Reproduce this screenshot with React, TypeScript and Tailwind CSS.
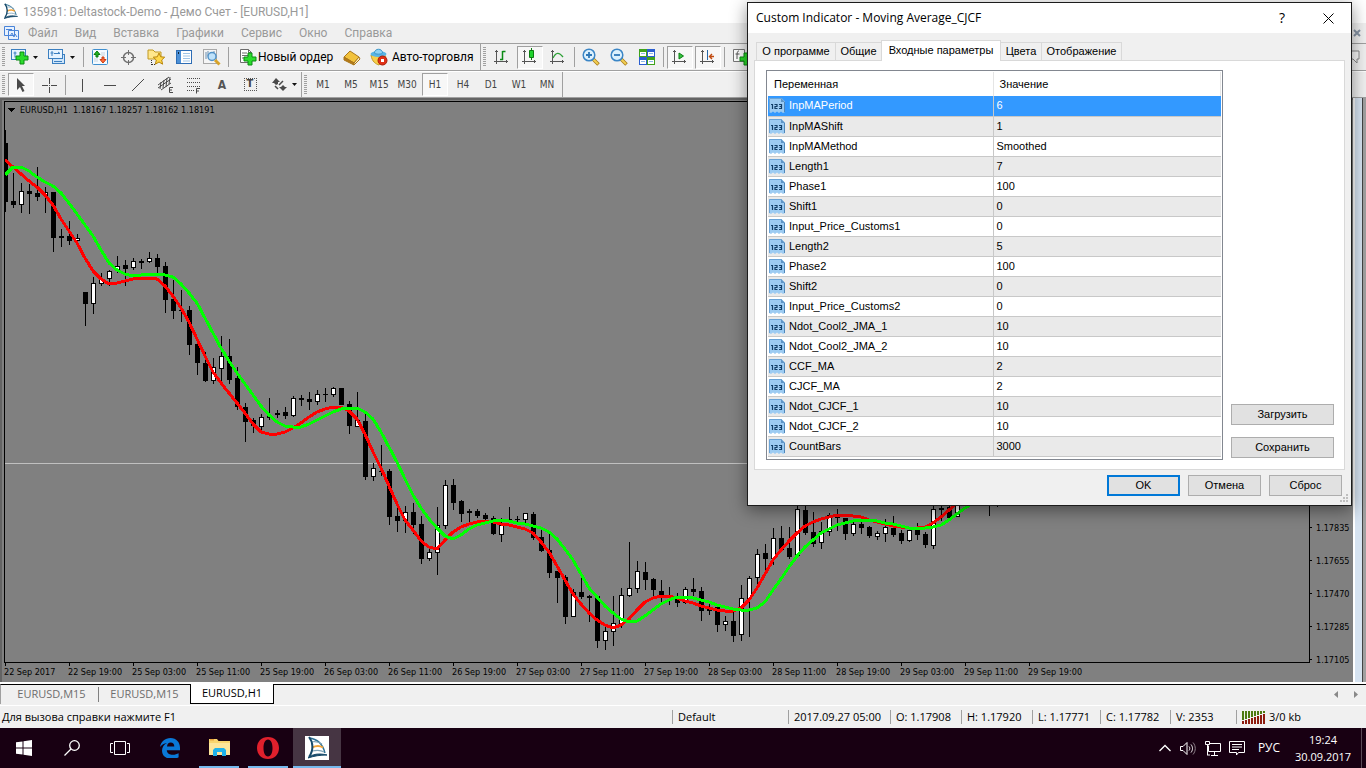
import type { ReactNode } from "react";
import { clsx } from "clsx";

// [high, body top, body bottom, low, rising]
type Candle = [number, number, number, number, 0 | 1];

const CANDLES: Candle[] = [
  [130, 143, 202, 212, 0], [173, 201, 205, 208, 0], [183, 191, 205, 213, 1], [184, 191, 194, 214, 0],
  [167, 193, 197, 201, 0], [187, 192, 196, 213, 1], [192, 192, 238, 252, 0], [229, 236, 238, 247, 0],
  [221, 236, 241, 245, 0], [234, 238, 241, 247, 1], [292, 292, 304, 326, 0], [277, 283, 304, 314, 1],
  [273, 279, 284, 286, 1], [270, 271, 279, 286, 1], [256, 266, 271, 273, 1], [260, 265, 269, 286, 0],
  [258, 261, 268, 270, 1], [259, 261, 263, 269, 0], [252, 258, 262, 263, 1], [254, 258, 267, 273, 0],
  [262, 266, 300, 313, 0], [280, 299, 311, 319, 0], [290, 310, 311, 322, 0], [306, 310, 345, 355, 0],
  [344, 344, 363, 375, 0], [352, 363, 381, 382, 0], [358, 367, 381, 384, 1], [336, 356, 369, 382, 1],
  [339, 356, 380, 384, 0], [367, 378, 407, 410, 0], [403, 407, 422, 442, 0], [418, 420, 426, 433, 0],
  [414, 417, 427, 430, 1], [398, 415, 418, 420, 1], [410, 413, 415, 418, 0], [407, 412, 416, 419, 0],
  [396, 398, 416, 417, 1], [395, 398, 400, 406, 0], [392, 399, 402, 410, 0], [390, 394, 402, 405, 1],
  [388, 394, 395, 402, 0], [387, 388, 395, 397, 1], [388, 388, 405, 405, 0], [401, 404, 426, 434, 0],
  [392, 420, 427, 427, 1], [414, 421, 477, 480, 0], [463, 468, 477, 481, 1], [445, 471, 472, 476, 0],
  [469, 471, 517, 525, 0], [502, 516, 521, 532, 0], [506, 512, 521, 533, 1], [503, 512, 525, 534, 0],
  [516, 524, 559, 564, 0], [548, 552, 559, 561, 1], [507, 525, 553, 575, 1], [480, 485, 526, 529, 1],
  [479, 485, 503, 510, 0], [500, 501, 514, 522, 0], [509, 511, 513, 523, 0], [509, 511, 516, 518, 0],
  [513, 515, 519, 521, 0], [516, 518, 534, 535, 0], [518, 525, 535, 542, 1], [507, 519, 520, 522, 0],
  [516, 519, 520, 522, 0], [513, 513, 520, 523, 1], [512, 514, 538, 540, 0], [530, 537, 551, 552, 0],
  [534, 550, 573, 578, 0], [571, 571, 578, 603, 0], [575, 577, 617, 624, 0], [589, 592, 617, 617, 1],
  [575, 592, 597, 599, 0], [595, 596, 598, 622, 0], [596, 596, 641, 648, 0], [626, 631, 641, 650, 1],
  [596, 623, 632, 646, 1], [588, 595, 624, 628, 1], [542, 588, 596, 597, 1], [561, 571, 589, 593, 1],
  [562, 572, 580, 590, 0], [578, 579, 590, 596, 0], [580, 591, 597, 602, 0], [587, 596, 597, 605, 0],
  [593, 599, 603, 607, 0], [587, 589, 603, 604, 1], [578, 589, 592, 596, 0], [587, 591, 611, 621, 0],
  [604, 608, 611, 615, 0], [605, 607, 625, 632, 0], [616, 621, 625, 631, 1], [612, 621, 636, 642, 0],
  [585, 598, 635, 641, 1], [576, 578, 599, 637, 1], [549, 554, 578, 586, 1], [544, 553, 559, 572, 0],
  [528, 538, 559, 565, 1], [526, 538, 550, 550, 0], [527, 548, 557, 559, 0], [500, 509, 556, 558, 1],
  [500, 510, 533, 535, 0], [512, 532, 544, 547, 0], [522, 531, 543, 549, 1], [513, 515, 532, 536, 1],
  [509, 516, 518, 531, 0], [518, 518, 534, 540, 0], [522, 524, 534, 536, 1], [520, 524, 528, 534, 0],
  [526, 527, 536, 538, 0], [531, 533, 537, 540, 1], [519, 527, 534, 542, 1], [516, 528, 535, 537, 0],
  [530, 533, 541, 544, 0], [528, 530, 541, 542, 1], [523, 530, 535, 540, 0], [532, 534, 545, 548, 0],
  [490, 509, 546, 549, 1], [490, 508, 510, 521, 0], [490, 507, 518, 518, 0], [480, 490, 517, 517, 1],
  [480, 485, 492, 500, 0], [480, 485, 492, 500, 0], [480, 485, 492, 500, 0], [480, 485, 492, 516, 0],
  [480, 485, 492, 507, 0],
];

const FAST = [
  160, 167, 174, 181, 187, 195, 205, 219, 231, 243, 258, 271, 279, 284, 283, 281, 279, 278, 278, 279, 286, 296,
  308, 322, 339, 356, 372, 383, 393, 403, 413, 424, 432, 434, 434, 432, 428, 423, 417, 412, 409, 407, 407, 411,
  419, 434, 452, 468, 486, 504, 520, 530, 541, 547, 549, 540, 532, 527, 524, 522, 521, 522, 524, 525, 527, 529,
  533, 542, 552, 566, 580, 594, 604, 613, 620, 625, 628, 625, 619, 610, 602, 598, 596, 596, 598, 601, 603, 606,
  608, 610, 611, 611, 608, 600, 588, 574, 560, 550, 541, 533, 526, 522, 519, 517, 515, 515, 516, 517, 520, 522,
  524, 526, 527, 528, 528, 527, 523, 517, 510, 503, 496,
];

const SLOW = [
  175, 167, 167, 171, 177, 182, 186, 193, 203, 214, 225, 236, 250, 263, 270, 274, 276, 275, 274, 274, 275, 277,
  284, 293, 303, 318, 333, 348, 361, 373, 384, 395, 406, 415, 422, 426, 427, 427, 424, 420, 416, 412, 409, 408,
  408, 412, 419, 432, 447, 462, 479, 495, 508, 519, 528, 536, 539, 535, 529, 525, 523, 521, 520, 521, 523, 524,
  526, 528, 532, 539, 549, 560, 574, 588, 597, 606, 613, 619, 622, 621, 616, 610, 604, 600, 597, 597, 598, 600,
  602, 605, 607, 609, 610, 610, 608, 602, 590, 579, 567, 556, 547, 540, 533, 529, 525, 523, 521, 520, 520, 521,
  523, 524, 526, 528, 528, 528, 527, 525, 520, 514, 508, 503, 497,
];

const TIMES = [
  "22 Sep 2017", "22 Sep 19:00", "25 Sep 03:00", "25 Sep 11:00", "25 Sep 19:00", "26 Sep 03:00",
  "26 Sep 11:00", "26 Sep 19:00", "27 Sep 03:00", "27 Sep 11:00", "27 Sep 19:00", "28 Sep 03:00",
  "28 Sep 11:00", "28 Sep 19:00", "29 Sep 03:00", "29 Sep 11:00", "29 Sep 19:00",
];

const PRICES = ["1.17835", "1.17655", "1.17470", "1.17285", "1.17105"];

const PARAMS: [string, string][] = [
  ["InpMAPeriod", "6"],
  ["InpMAShift", "1"],
  ["InpMAMethod", "Smoothed"],
  ["Length1", "7"],
  ["Phase1", "100"],
  ["Shift1", "0"],
  ["Input_Price_Customs1", "0"],
  ["Length2", "5"],
  ["Phase2", "100"],
  ["Shift2", "0"],
  ["Input_Price_Customs2", "0"],
  ["Ndot_Cool2_JMA_1", "10"],
  ["Ndot_Cool2_JMA_2", "10"],
  ["CCF_MA", "2"],
  ["CJCF_MA", "2"],
  ["Ndot_CJCF_1", "10"],
  ["Ndot_CJCF_2", "10"],
  ["CountBars", "3000"],
];

const MENU = ["Файл", "Вид", "Вставка", "Графики", "Сервис", "Окно", "Справка"];
const TIMEFRAMES = ["M1", "M5", "M15", "M30", "H1", "H4", "D1", "W1", "MN"];

const toPoints = (values: number[]) => values.map((y, i) => `${5 + i * 8},${y}`).join(" ");

/* ---------- icons ---------- */

const Icon = ({ size = 18, children }: { size?: number; children: ReactNode }) => (
  <svg width={size} height={size} viewBox={`0 0 ${size} ${size}`} fill="none" className="shrink-0" aria-hidden="true">
    {children}
  </svg>
);

const SailIcon = ({ size }: { size: number }) => (
  <svg width={size} height={size} viewBox="0 0 24 24" fill="none" className="shrink-0 bg-white" aria-hidden="true">
    <path d="M4 2c9 1 14 7 16 15" stroke="#2d6f92" strokeWidth="1.4" />
    <path d="M6 6c4-1 8 0 11 2M7 15c5-1 9-1 12 1" stroke="#7fa3b7" strokeWidth="1.2" />
    <path d="M7 11.500c4-2 8-2 11 0" stroke="#f2a33a" strokeWidth="2" />
    <path d="M4 1c4 5 5 13 0 20" stroke="#174a6a" strokeWidth="2" />
    <path d="M3 22c4-4 11-5 19-3-7 0-13 1-19 3z" fill="#174a6a" stroke="#174a6a" />
  </svg>
);

const Plus = ({ x, y }: { x: number; y: number }) => (
  <path d={`M${x + 4} ${y}h4v4h4v4h-4v4h-4v-4h-4v-4h4z`} fill="#2bdc2b" stroke="#0a8a12" />
);

const NewChartIcon = () => (
  <Icon>
    <rect x="0.5" y="1.5" width="14" height="10" fill="#e6f3ff" stroke="#3b7fc0" />
    <path d="M4 3.500v6M2.500 5h3M6 8.500h6" stroke="#3b7fc0" />
    <Plus x={5} y={4} />
  </Icon>
);

const ProfilesIcon = () => (
  <Icon>
    <rect x="4.500" y="6.500" width="12" height="9" fill="#cfe6fb" stroke="#3b7fc0" />
    <rect x="0.500" y="1.500" width="14" height="9" fill="#e6f3ff" stroke="#3b7fc0" />
    <path d="M4 3v5M2.500 5h3M6 5.500h6M10 4l2 1.500" stroke="#3b7fc0" />
    <path d="M6 13.500h8" stroke="#3b7fc0" />
  </Icon>
);

const MarketWatchIcon = () => (
  <Icon size={16}>
    <rect x="0.500" y="0.500" width="15" height="15" rx="1" fill="#f4faff" stroke="#3f8fcf" />
    <path d="M9 4h4M9 6h4M2 10h4M2 12h4" stroke="#c8d4de" />
    <path d="M5 2l3 3.500H6v2.500H4V5.500H2z" fill="#20b020" stroke="#0b7d10" />
    <path d="M11 14l-3-3.500h2V8h2v2.500h2z" fill="#ff6a3a" stroke="#c83c10" />
  </Icon>
);

const NavigatorIcon = () => (
  <Icon size={16}>
    <circle cx="8.500" cy="8.500" r="5" stroke="#6f6f6f" strokeWidth="1.500" />
    <path d="M8.500 1v5M8.500 11v5M1 8.500h5M11 8.500h5" stroke="#6f6f6f" />
  </Icon>
);

const FavoritesIcon = () => (
  <Icon>
    <path d="M1 2h5l2 2h6v7H1z" fill="#ffe78c" stroke="#c09820" />
    <path d="M4.500 12v5M5 16.500h4" stroke="#333" strokeDasharray="1 1" />
    <path d="M12 5l1.700 3.800 4 .4-3 2.800.9 4.200-3.600-2.200L8.400 16.200l.9-4.200-3-2.800 4-.4z" fill="#ffd84a" stroke="#b8860b" />
  </Icon>
);

const TerminalIcon = () => (
  <Icon size={16}>
    <rect x="0.500" y="1.500" width="15" height="13" fill="#fff" stroke="#2d6db5" />
    <path d="M3 2v12" stroke="#4b8fd6" strokeWidth="4" />
    <path d="M7 4.500h7M7 7h7M7 9.500h7M7 12h7" stroke="#9fc4e6" />
    <path d="M2 3h1v2H2z" fill="#123" />
  </Icon>
);

const TesterIcon = () => (
  <Icon>
    <rect x="0.500" y="1.500" width="13" height="14" fill="#f5f5f5" stroke="#a8a8a8" />
    <path d="M3 4v7M5 3v5M11 3v5" stroke="#6a8fb0" />
    <circle cx="9" cy="8.500" r="4" fill="#bfe2fa" stroke="#5293c8" strokeWidth="1.500" />
    <path d="M12 12l4.500 4.500" stroke="#d7a32a" strokeWidth="3" />
  </Icon>
);

const NewOrderIcon = () => (
  <Icon>
    <path d="M1.500 1.500h8l3 3v10h-11z" fill="#fff" stroke="#6c6c6c" />
    <path d="M3 5h5M3 7.500h7M3 10h4" stroke="#6c6c6c" />
    <path d="M9.500 1.500v3h3" stroke="#6c6c6c" />
    <Plus x={5} y={5} />
  </Icon>
);

const BookIcon = () => (
  <Icon>
    <path d="M1 9l6-6 9 6-5 6z" fill="#f2c23c" stroke="#a9761a" />
    <path d="M1 9v3l10 5v-2z" fill="#b57a18" stroke="#a9761a" />
    <path d="M11 15v2l6-6-1-2z" fill="#fff4c8" stroke="#a9761a" />
  </Icon>
);

const RobotIcon = () => (
  <Icon>
    <path d="M1 7c1 7 5 9 8 10l7-9z" fill="#f6cf4a" stroke="#c39a26" />
    <ellipse cx="8.500" cy="6" rx="8" ry="3" fill="#58b5e6" />
    <path d="M4.500 5c0-5 8-5 8 0 0 1.500-8 1.500-8 0z" fill="#8fd3f5" stroke="#3d97c9" />
    <circle cx="12.500" cy="12.500" r="4.500" fill="#e03016" stroke="#a81c08" />
    <path d="M11 11h3v3h-3z" fill="#fff" />
  </Icon>
);

const Axes = () => <path d="M3.500 2v14M1 13.500h14M2 3.500h3M13.500 12v3" stroke="#555" />;

const BarsIcon = () => (
  <Icon>
    <Axes />
    <path d="M9.500 3v9M9.500 3.500h3M7 11.500h3" stroke="#0b8a14" strokeWidth="1.500" />
  </Icon>
);

const CandlesIcon = () => (
  <Icon>
    <Axes />
    <path d="M10.500 0v12" stroke="#0b7d10" />
    <path d="M8.500 2.500h4v7h-4z" fill="#1fd32c" stroke="#0b7d10" />
  </Icon>
);

const LineIcon = () => (
  <Icon>
    <Axes />
    <path d="M4 10c3-6 6-6 10-1" stroke="#2ca035" strokeWidth="1.300" />
  </Icon>
);

const ZoomIcon = ({ plus = false }) => (
  <Icon>
    <path d="M11 11l5.500 5.500" stroke="#a87c1c" strokeWidth="3.500" />
    <path d="M11 11l5 5" stroke="#f2cf52" strokeWidth="2" />
    <circle cx="7" cy="7" r="5.800" fill="#dcf1fd" stroke="#3b86c6" strokeWidth="1.500" />
    <path d={plus ? "M4 7h6M7 4v6" : "M4 7h6"} stroke="#2f78b8" strokeWidth="1.800" />
  </Icon>
);

const TileIcon = () => (
  <Icon size={16}>
    <path d="M0 0h8v8H0zM8 8h8v8H8z" fill="#3fa31c" />
    <path d="M8 0h8v8H8zM0 8h8v8H0z" fill="#2b5fd0" />
    <path d="M1 3h6v4H1zM9 3h6v4H9zM1 11h6v4H1zM9 11h6v4H9z" fill="#fff" />
    <path d="M2 4.500h4M10 4.500h4M2 12.500h4M10 12.500h4" stroke="#8db8e6" />
  </Icon>
);

const ScrollIcon = () => (
  <Icon>
    <Axes />
    <path d="M8 5l4.500 3L8 11z" fill="#35c542" stroke="#0b7d10" />
  </Icon>
);

const ShiftIcon = () => (
  <Icon>
    <Axes />
    <path d="M8.500 2v10" stroke="#2567a8" />
    <path d="M15 8.500h-4M13 6l-2.500 2.500L13 11" stroke="#c04a10" strokeWidth="1.400" />
  </Icon>
);

const IndicatorsIcon = () => (
  <Icon>
    <path d="M1.500 1.500h11v12h-11z" fill="#fff" stroke="#777" />
    <path d="M7 3c-2 0-2 2-2 8M3.500 6h4" stroke="#555" />
    <Plus x={8} y={5} />
  </Icon>
);

const CursorIcon = () => (
  <Icon>
    <path d="M5 2v12l3-3 2.500 5 2-1-2.500-5H13z" fill="#4a4a4a" />
  </Icon>
);

const CrosshairIcon = () => (
  <Icon size={16}>
    <path d="M8.500 1v6M8.500 10v6M1 8.500h6M10 8.500h6" stroke="#4a4a4a" />
    <path d="M8 8h1v1H8z" fill="#4a4a4a" />
  </Icon>
);

const DrawIcon = ({ d }: { d: string }) => (
  <Icon size={16}>
    <path d={d} stroke="#4a4a4a" />
  </Icon>
);

const ChannelIcon = () => (
  <Icon>
    <path d="M1 12L14 3M1 9L12 1M4 14L14 7M4 6l-1 7M7 4l-1 8M10 2L9 11M13 1l-1 7" stroke="#4a4a4a" />
    <path d="M16 11.500h-3.500v5H16M12.500 14H15" stroke="#4a4a4a" />
  </Icon>
);

const FiboIcon = () => (
  <Icon>
    <path d="M2 2.500h14M2 6.500h14M2 10.500h14M2 14.500h7" stroke="#4a4a4a" strokeDasharray="1 1" />
    <path d="M15 12.500h-3.500v5M11.500 15H14" stroke="#4a4a4a" />
  </Icon>
);

const ArrowsIcon = () => (
  <Icon size={16}>
    <path d="M4 1l4 4H6v2L4 8 2 6H0z" fill="#4a4a4a" />
    <path d="M9 10l2-2 2 2h2l-4 4-4-4z" fill="#4a4a4a" />
    <path d="M3 9l3 3M7 8l4-4" stroke="#4a4a4a" strokeWidth="1.500" />
  </Icon>
);

const Caret = () => (
  <svg width="5" height="3" viewBox="0 0 5 3" className="shrink-0" aria-hidden="true">
    <path d="M0 0h5L2.500 3z" fill="#111" />
  </svg>
);

const ParamIcon = () => (
  <svg width="16" height="15" viewBox="0 0 16 15" className="shrink-0" aria-hidden="true">
    <path d="M0 0h12.500L16 3.500V14l-2 1-2-1.500-2 1.500-2-1.500L6 15l-2-1.500L2 15l-2-1z" fill="#9ccbf2" />
    <path d="M0.500 14V0.500h12" stroke="#6aa4d8" fill="none" />
    <path d="M12 0l4 4h-4z" fill="#5f95c6" />
    <path d="M15.500 4v10" stroke="#4f87ba" />
    <path
      d="M2 6.500h1.500V11M5.500 6.500H8v2H6v2H8.500M10 6.500h2.500v4H10M10.500 8.500H12.500"
      stroke="#123f68"
      strokeWidth="1.200"
      fill="none"
    />
  </svg>
);

/* ---------- toolbars ---------- */

const Grip = () => (
  <div className="mx-[2px] h-5 w-[3px] shrink-0 bg-[repeating-linear-gradient(#a0a0a0_0_1px,transparent_1px_2px)]" />
);

const Divider = () => <div className="mx-[2px] h-5 w-px shrink-0 bg-[#a0a0a0]" />;

type ToolProps = { label: string; pressed?: boolean; children: ReactNode };

const Tool = ({ label, pressed, children }: ToolProps) => (
  <button type="button" aria-label={label} className="flex h-6 w-7 shrink-0 items-center justify-center">
    <span
      className={clsx(
        "flex h-[23px] w-[26px] items-center justify-center border font-['DejaVu_Sans_Condensed',sans-serif] text-[10px] text-[#444]",
        pressed ? "border-[#a0a0a0] border-r-white border-b-white bg-[#f7f7f7]" : "border-transparent"
      )}
    >
      {children}
    </span>
  </button>
);

const ToolbarGroup = ({ children }: { children: ReactNode }) => (
  <div className="flex shrink-0 items-center border-r border-[#a0a0a0] pr-px">{children}</div>
);

const MainToolbar = () => (
  <div className="flex h-[27px] shrink-0 border-b border-[#a0a0a0] bg-[#f0f0f0]">
    <ToolbarGroup>
      <Grip />
      <button type="button" aria-label="Новый график" className="flex w-[37px] items-center gap-1 pl-1">
        <NewChartIcon />
        <Caret />
      </button>
      <button type="button" aria-label="Профили" className="flex w-[37px] items-center gap-1 pl-1">
        <ProfilesIcon />
        <Caret />
      </button>
      <Divider />
      <Tool label="Обзор рынка"><MarketWatchIcon /></Tool>
      <Tool label="Окно данных"><NavigatorIcon /></Tool>
      <Tool label="Навигатор"><FavoritesIcon /></Tool>
      <Tool label="Терминал"><TerminalIcon /></Tool>
      <Tool label="Тестер стратегий"><TesterIcon /></Tool>
      <Divider />
      <button type="button" className="flex w-[107px] items-center gap-px pl-2 font-['Roboto',sans-serif] text-xs whitespace-nowrap">
        <NewOrderIcon />
        Новый ордер
      </button>
      <Tool label="MetaEditor"><BookIcon /></Tool>
      <button type="button" className="flex w-[113px] items-center gap-1 pl-1 font-['Roboto',sans-serif] text-xs whitespace-nowrap">
        <RobotIcon />
        Авто-торговля
      </button>
    </ToolbarGroup>
    <div className="flex items-center">
      <Grip />
      <Tool label="Бары"><BarsIcon /></Tool>
      <Tool label="Японские свечи" pressed><CandlesIcon /></Tool>
      <Tool label="Линия"><LineIcon /></Tool>
      <Divider />
      <Tool label="Увеличить"><ZoomIcon plus /></Tool>
      <Tool label="Уменьшить"><ZoomIcon /></Tool>
      <Tool label="Расположить окна"><TileIcon /></Tool>
      <Divider />
      <Tool label="Автопрокрутка" pressed><ScrollIcon /></Tool>
      <Tool label="Сдвиг графика" pressed><ShiftIcon /></Tool>
      <Divider />
      <Tool label="Индикаторы"><IndicatorsIcon /></Tool>
    </div>
    <button type="button" aria-label="Чат" className="mr-1 ml-auto">
      <Icon>
        <path d="M2 3h13v8h-2v4l-4-4H2z" fill="#fafafa" stroke="#8a8a8a" />
      </Icon>
    </button>
  </div>
);

const DrawingToolbar = () => (
  <div className="flex h-[27px] shrink-0 border-t border-b border-t-white border-b-[#a0a0a0] bg-[#f0f0f0]">
    <ToolbarGroup>
      <Grip />
      <Tool label="Курсор" pressed><CursorIcon /></Tool>
      <Tool label="Перекрестие"><CrosshairIcon /></Tool>
      <Divider />
      <Tool label="Вертикальная линия"><DrawIcon d="M8.500 2v13" /></Tool>
      <Tool label="Горизонтальная линия"><DrawIcon d="M2 8.500h12" /></Tool>
      <Tool label="Трендовая линия"><DrawIcon d="M2 14L14 2" /></Tool>
      <Tool label="Канал"><ChannelIcon /></Tool>
      <Tool label="Фибоначчи"><FiboIcon /></Tool>
      <Tool label="Текст"><span className="text-xs font-bold text-[#555]">A</span></Tool>
      <Tool label="Метка">
        <span className="flex h-[13px] w-[13px] items-center justify-center border border-dotted border-[#555] text-[11px] font-bold">
          T
        </span>
      </Tool>
      <button type="button" aria-label="Стрелки" className="flex w-9 items-center gap-1 pl-2">
        <ArrowsIcon />
        <Caret />
      </button>
    </ToolbarGroup>
    <ToolbarGroup>
      <Grip />
      {TIMEFRAMES.map((tf) => (
        <Tool key={tf} label={tf} pressed={tf === "H1"}>
          {tf}
        </Tool>
      ))}
    </ToolbarGroup>
  </div>
);

/* ---------- chart ---------- */

const Chart = () => (
  <svg
    width="1353"
    height="584"
    viewBox="0 98 1353 584"
    className="block shrink-0 bg-[#808080] font-['DejaVu_Sans_Condensed','DejaVu_Sans',sans-serif] text-[9px]"
    shapeRendering="crispEdges"
  >
    <path d="M0 98h1353v2H2v582H0z" fill="#646464" />
    <path d="M5 463.500h1304" stroke="#c0c0c0" />
    {CANDLES.map(([high, top, bottom, low, rising], i) => {
      const x = 5 + i * 8;
      return (
        <g key={i}>
          <rect x={x} y={high} width="1" height={low - high} fill="#000" />
          <rect x={x - 2} y={top} width="5" height={Math.max(bottom - top, 1)} fill="#000" />
          {rising === 1 && bottom - top > 2 && (
            <rect x={x - 1} y={top + 1} width="3" height={bottom - top - 2} fill="#fff" />
          )}
        </g>
      );
    })}
    <polyline points={toPoints(FAST)} fill="none" stroke="#f00" strokeWidth="3" strokeLinejoin="round" />
    <polyline points={toPoints(SLOW)} fill="none" stroke="#0f0" strokeWidth="3" strokeLinejoin="round" />
    <rect x="2" y="102" width="2" height="560" fill="#808080" />
    <path d="M4.500 662V101.500h1305V662M4 662.500h1306" stroke="#000" fill="none" />
    <path d="M8 108h7l-3.500 4z" fill="#000" />
    <text x="20" y="113" xmlSpace="preserve">EURUSD,H1  1.18167 1.18257 1.18162 1.18191</text>
    {PRICES.map((price, i) => (
      <g key={price}>
        <path d={`M1310 ${527.5 + i * 33}h2`} stroke="#000" />
        <text x="1316" y={531 + i * 33}>{price}</text>
      </g>
    ))}
    {TIMES.map((time, i) => (
      <g key={time}>
        <path d={`M${5.5 + i * 64} 663v3`} stroke="#000" />
        <text x={4 + i * 64} y="675">{time}</text>
      </g>
    ))}
  </svg>
);

/* ---------- dialog ---------- */

const TABS = [
  { label: "О программе", width: "w-20" },
  { label: "Общие", width: "w-[47px]" },
  { label: "Входные параметры", width: "w-[120px]", active: true },
  { label: "Цвета", width: "w-[42px]" },
  { label: "Отображение", width: "w-[81px]" },
];

const DialogButton = ({ children, primary }: { children: ReactNode; primary?: boolean }) => (
  <button
    type="button"
    className={clsx(
      "h-[21px] min-w-[73px] bg-[#e1e1e1]",
      primary ? "border-2 border-[#0078d7]" : "border border-[#adadad]"
    )}
  >
    {children}
  </button>
);

const IndicatorDialog = () => (
  <div
    role="dialog"
    aria-label="Custom Indicator - Moving Average_CJCF"
    className="absolute top-[2px] right-[14px] flex w-[605px] flex-col border border-[#1c1c1c] bg-[#f0f0f0] font-['Liberation_Sans',Arial,sans-serif] text-[11px] text-black shadow-[0_4px_16px_rgba(0,0,0,0.45)]"
  >
    <div className="flex h-[30px] items-center bg-white pl-2 font-['Open_Sans',sans-serif] text-xs">
      <h2 className="flex-1">Custom Indicator - Moving Average_CJCF</h2>
      <button type="button" className="w-[46px] text-sm">?</button>
      <button type="button" aria-label="Закрыть" className="flex w-[46px] justify-center">
        <svg width="11" height="11" viewBox="0 0 11 11" aria-hidden="true">
          <path d="M0.500 0.500l10 10M10.500 0.500l-10 10" stroke="#000" />
        </svg>
      </button>
    </div>
    <div className="px-[6px] pt-[7px]">
      <div role="tablist" className="flex h-5 items-end pl-[3px]">
        {TABS.map((tab) => (
          <button
            key={tab.label}
            type="button"
            role="tab"
            aria-selected={!!tab.active}
            className={clsx(
              "-ml-px flex items-center justify-center border border-b-0 border-[#d9d9d9] whitespace-nowrap",
              tab.width,
              tab.active ? "z-10 -mb-px h-[21px] bg-white pb-[2px]" : "h-[18px]"
            )}
          >
            {tab.label}
          </button>
        ))}
      </div>
      <div className="flex items-end gap-2 border border-[#d9d9d9] bg-white py-[9px] pr-[10px] pl-[11px]">
        <div className="flex-1 border border-[#828790] p-px">
          <table className="w-full table-fixed border-collapse text-left">
            <thead>
              <tr className="h-6">
                <th className="w-[225px] border-r border-[#e5e5e5] pl-[6px] font-normal">Переменная</th>
                <th className="border-r border-[#e5e5e5] pl-[6px] font-normal">Значение</th>
              </tr>
            </thead>
            <tbody>
              {PARAMS.map(([name, value], i) => (
                <tr
                  key={name}
                  className={clsx(
                    "h-5 border-b border-[#c8c8c8]",
                    i === 0 ? "bg-[#3399ff] text-white" : i % 2 ? "bg-[#eaeaea]" : "bg-white"
                  )}
                >
                  <td className="border-r border-[#c8c8c8] p-0 pl-px">
                    <span className="flex items-center gap-1">
                      <ParamIcon />
                      {name}
                    </span>
                  </td>
                  <td className="p-0 pl-[3px]">{value}</td>
                </tr>
              ))}
            </tbody>
          </table>
          <div className="h-px" />
        </div>
        <div className="flex w-[103px] flex-col gap-3 pb-[2px]">
          <DialogButton>Загрузить</DialogButton>
          <DialogButton>Сохранить</DialogButton>
        </div>
      </div>
    </div>
    <div className="flex justify-end gap-2 pt-[5px] pr-[9px] pb-[9px]">
      <DialogButton primary>OK</DialogButton>
      <DialogButton>Отмена</DialogButton>
      <DialogButton>Сброс</DialogButton>
    </div>
    <svg width="8" height="8" viewBox="0 0 8 8" className="absolute right-[3px] bottom-[3px]" aria-hidden="true">
      <path d="M6 0h2v2H6zM3 3h2v2H3zM6 3h2v2H6zM0 6h2v2H0zM3 6h2v2H3zM6 6h2v2H6z" fill="#bfbfbf" />
    </svg>
  </div>
);

/* ---------- bottom bars ---------- */

const ChartTabs = () => (
  <div className="flex h-[22px] shrink-0 border-b border-white bg-[#f0f0f0] text-[11px] text-[#6d6d6d]">
    <div className="flex h-5 flex-1">
      <div className="flex w-[190px] items-center border-t border-l border-t-black border-l-[#a0a0a0]">
        <button type="button" className="w-[98px] border-r border-[#808080] pl-1">EURUSD,M15</button>
        <button type="button" className="flex-1">EURUSD,M15</button>
      </div>
      <button type="button" className="w-[84px] border border-t-0 border-black bg-white text-black">EURUSD,H1</button>
      <div className="flex flex-1 items-center justify-end gap-4 border-t border-black pr-2">
        <svg width="4" height="7" viewBox="0 0 4 7" aria-hidden="true"><path d="M4 0v7L0 3.500z" fill="#888" /></svg>
        <svg width="4" height="7" viewBox="0 0 4 7" aria-hidden="true"><path d="M0 0v7l4-3.500z" fill="#888" /></svg>
      </div>
    </div>
  </div>
);

const STATUS = [
  { text: "Default", width: "w-[116px]" },
  { text: "2017.09.27 05:00", width: "w-[102px]" },
  { text: "O: 1.17908", width: "w-[71px]" },
  { text: "H: 1.17920", width: "w-[71px]" },
  { text: "L: 1.17771", width: "w-[68px]" },
  { text: "C: 1.17782", width: "w-[70px]" },
  { text: "V: 2353", width: "w-[66px]" },
];

const StatusBar = () => (
  <div className="flex h-[22px] shrink-0 items-center bg-[#f0f0f0] text-[11px] whitespace-nowrap">
    <div className="flex-1 pl-[2px]">Для вызова справки нажмите F1</div>
    {STATUS.map((cell) => (
      <div key={cell.text} className={clsx("border-l border-[#a0a0a0] pl-[5px]", cell.width)}>
        {cell.text}
      </div>
    ))}
    <div className="flex w-[130px] items-center gap-1 border-l border-[#a0a0a0] pl-[5px]">
      <svg width="23" height="13" viewBox="0 0 23 13" aria-hidden="true">
        {[0, 1, 2, 3, 4, 5, 6, 7].map((i) => (
          <g key={i}>
            <rect x={i * 3} y="0" width="2" height={9 - i} fill="#4e7a12" />
            <rect x={i * 3} y={10 - i} width="2" height={3 + i} fill="#8e1b0e" />
          </g>
        ))}
      </svg>
      3/0 kb
    </div>
  </div>
);

type TaskButtonProps = { label: string; running?: boolean; active?: boolean; children: ReactNode };

const TaskButton = ({ label, running, active, children }: TaskButtonProps) => (
  <button
    type="button"
    aria-label={label}
    className={clsx("relative flex h-full w-12 items-center justify-center", active && "bg-[#463543]")}
  >
    {children}
    {running && <span className={clsx("absolute bottom-0 h-[2px] bg-[#76b9ed]", active ? "inset-x-0" : "inset-x-1")} />}
  </button>
);

const Taskbar = () => (
  <div className="flex h-10 shrink-0 items-center bg-[#180012] text-white">
    <TaskButton label="Пуск">
      <Icon size={16}>
        <path d="M0 2.300L6.500 1.400V7.500H0zM7.500 1.200L16 0v7.500H7.500zM0 8.500h6.500v6.100L0 13.700zM7.500 8.500H16V16l-8.500-1.200z" fill="#fff" />
      </Icon>
    </TaskButton>
    <TaskButton label="Поиск">
      <Icon size={16}>
        <circle cx="10.500" cy="5.500" r="4.800" stroke="#fff" strokeWidth="1.300" />
        <path d="M7 9L0.500 15.500" stroke="#fff" strokeWidth="1.300" />
      </Icon>
    </TaskButton>
    <TaskButton label="Представление задач">
      <Icon size={20}>
        <path d="M4.500 3.500h11v13h-11zM3 5.500H.5v9H3M17 5.500h2.500v9H17" stroke="#fff" />
      </Icon>
    </TaskButton>
    <div className="flex h-full gap-px pl-[2px]">
      <TaskButton label="Edge">
        <Icon size={20}>
          <path
            d="M0 9C1 3.500 5 0 10.500 0 16.500 0 20 4.500 20 9.800v2.400H6.800c.2 3.300 3 4.600 6 4.600 2.300 0 4.200-.6 5.800-1.500v4c-2 1-4.300 1.500-7 1.500C5.500 20.800 2 17.500 2 12.800c0-3.500 2-6.300 5-7.700-3 .3-5.300 1.700-7 3.900zm7-.4h7.300c0-2.600-1.400-4-3.600-4S7.300 6.200 7 8.600z"
            fill="#0a78d7"
          />
        </Icon>
      </TaskButton>
      <TaskButton label="Проводник" running>
        <Icon size={22}>
          <path d="M1 2h8l1.500 2H22v14H1z" fill="#f9d56e" />
          <path d="M1 6h21v12H1z" fill="#fde59a" />
          <path d="M2 2h4v1.500H2z" fill="#e8a33d" />
          <path d="M5 19v-6l2-2h9l2 2v6h-4v-4H9v4z" fill="#1fb1ea" />
        </Icon>
      </TaskButton>
      <TaskButton label="Opera" running>
        <Icon size={22}>
          <path
            d="M11 0C4.500 0 0 4.500 0 11s4.500 11 11 11 11-4.500 11-11S17.500 0 11 0zm0 2.500c3 0 4.500 3.800 4.500 8.500s-1.500 8.500-4.500 8.500S6.500 15.700 6.500 11 8 2.500 11 2.500z"
            fill="#e0202c"
            fillRule="evenodd"
          />
        </Icon>
      </TaskButton>
      <TaskButton label="MetaTrader" running active>
        <SailIcon size={24} />
      </TaskButton>
    </div>
    <div className="ml-auto flex h-full items-center text-xs">
      <button type="button" aria-label="Скрытые значки" className="mr-2">
        <Icon size={12}><path d="M0.500 9L6 3.500 11.500 9" stroke="#fff" strokeWidth="1.300" /></Icon>
      </button>
      <button type="button" aria-label="Громкость" className="mr-2">
        <Icon size={17}>
          <path d="M1.500 6.500h2.500l4-4v12l-4-4H1.500z" stroke="#fff" />
          <path d="M10 6.500c1 1 1 3 0 4M12 4.500c2 2.500 2 5.500 0 8" stroke="#fff" />
          <path d="M14 2.500c3 3.500 3 8.500 0 12" stroke="#8c7f89" />
        </Icon>
      </button>
      <button type="button" aria-label="Сеть" className="mr-2">
        <Icon size={17}>
          <path d="M5.500 3.500h11v8h-12v-6M10.500 12v3M7 15.500h7M1.500 1.500h4v3h-4zM3.500 5v10M3 15h3" stroke="#fff" />
        </Icon>
      </button>
      <button type="button" aria-label="Уведомления" className="mr-2">
        <Icon size={16}>
          <path d="M.5 1.500h15v11h-6l-2 2.500v-2.500h-7zM3 4.500h10M3 7h10M3 9.500h7" stroke="#fff" />
        </Icon>
      </button>
      <button type="button" className="w-8">РУС</button>
      <time className="flex w-[76px] flex-col text-center text-[11px] leading-[17px]" dateTime="2017-09-30T19:24">
        <span>19:24</span>
        <span>30.09.2017</span>
      </time>
      <div className="h-full w-[5px] border-l border-[#5a4a56]" />
    </div>
  </div>
);

export default function App() {
  return (
    <div className="relative flex min-h-screen flex-col overflow-hidden bg-[#f0f0f0] font-['Open_Sans',sans-serif] text-xs text-black">
      <header className="flex h-[23px] shrink-0 items-center gap-1 bg-white pl-[2px] font-['Roboto',sans-serif] text-[#999]">
        <SailIcon size={17} />
        <h1>135981: Deltastock-Demo - Демо Счет - [EURUSD,H1]</h1>
      </header>
      <nav className="flex h-5 shrink-0 items-center pl-1 font-['Roboto',sans-serif] text-[#999]">
        <Icon size={15}>
          <path d="M.5 .5h10v9H.5zM4.500 4.500h10v9h-10z" fill="#e8f2ff" stroke="#4a84d8" />
          <path d="M2 3.500h6M6 10l2-3 2 4 1-3 2 3" stroke="#4a84d8" />
        </Icon>
        <div className="flex gap-[17px] pl-[9px]">
          {MENU.map((item) => (
            <button key={item} type="button">
              {item}
            </button>
          ))}
        </div>
        <button type="button" aria-label="Закрыть график" className="mr-1 ml-auto">
          <Icon size={10}><path d="M2 2l6 6M8 2L2 8" stroke="#8794a5" strokeWidth="2" /></Icon>
        </button>
      </nav>
      <div className="h-px shrink-0 bg-[#a0a0a0]" />
      <MainToolbar />
      <DrawingToolbar />
      <main className="flex flex-1 border-b-2 border-white bg-[#a0a0a0]">
        <div className="flex-1 overflow-hidden bg-[#808080]">
          <Chart />
        </div>
        <div className="w-[9px] shrink-0 border-l-2 border-white bg-[#d6e3f1]" />
        <div className="w-1 shrink-0 border-l border-[#444] bg-[#a0a0a0]" />
      </main>
      <ChartTabs />
      <StatusBar />
      <Taskbar />
      <IndicatorDialog />
    </div>
  );
}
